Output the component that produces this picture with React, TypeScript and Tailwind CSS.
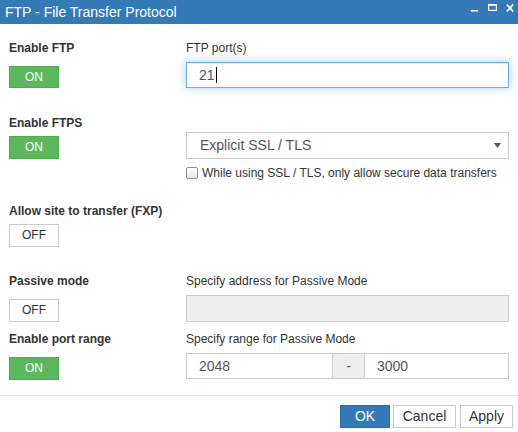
import React from "react";

function Toggle({ on }: { on: boolean }) {
  return on ? (
    <div className="w-[50px] h-[23px] bg-[#5cb85c] border border-[#4cae4c] text-white text-[12px] leading-[21px] text-center">
      ON
    </div>
  ) : (
    <div className="w-[50px] h-[23px] bg-white border border-[#cccccc] text-[#333333] text-[12px] leading-[21px] text-center">
      OFF
    </div>
  );
}

export default function App() {
  return (
    <div
      className="w-[518px] h-[432px] bg-white overflow-hidden text-[#333333]"
      style={{ fontFamily: '"Liberation Sans", Arial, sans-serif' }}
    >
      {/* Title bar */}
      <div className="h-[24px] bg-[#337ab7] flex items-center pl-[5px] pr-[4px] text-white">
        <div className="text-[14px] leading-[16px] flex-1">FTP - File Transfer Protocol</div>
        <div className="flex items-start h-full pt-[4px]">
          <svg width="7" height="8" viewBox="0 0 7 8">
            <rect x="0" y="6" width="7" height="1.5" fill="white" />
          </svg>
          <svg width="9" height="7" viewBox="0 0 9 7" className="ml-[10px]">
            <rect x="0.6" y="0.6" width="7.8" height="5.8" fill="none" stroke="white" strokeWidth="1.2" />
            <rect x="0" y="0" width="9" height="1.8" fill="white" />
          </svg>
          <svg width="8" height="8" viewBox="0 0 8 8" className="ml-[9px]">
            <path d="M0.8 0.5 L7.2 7.5 M7.2 0.5 L0.8 7.5" stroke="white" strokeWidth="1.8" />
          </svg>
        </div>
      </div>

      {/* Row 1: FTP */}
      <div className="flex">
        <div className="w-[186px] pl-[9px]">
          <div className="mt-[17px] text-[12px] leading-[14px] font-bold">Enable FTP</div>
          <div className="mt-[11px]">
            <div className="w-[50px] h-[22px] bg-[#5cb85c] border border-[#4cae4c] text-white text-[12px] leading-[20px] text-center">
              ON
            </div>
          </div>
        </div>
        <div className="w-[323px]">
          <div className="mt-[17px] text-[12px] leading-[14px]">FTP port(s)</div>
          <div className="mt-[7px] h-[26px] border border-[#66afe9] shadow-[inset_0_1px_1px_rgba(0,0,0,0.075),0_0_8px_rgba(102,175,233,0.6)] flex items-center pl-[12px] text-[14px] text-[#555555]">
            <span>21</span>
            <span className="inline-block w-[1px] h-[16px] bg-black ml-[1px]"></span>
          </div>
        </div>
      </div>

      {/* Row 2: FTPS */}
      <div className="flex">
        <div className="w-[186px] pl-[9px]">
          <div className="mt-[28px] text-[12px] leading-[14px] font-bold">Enable FTPS</div>
          <div className="mt-[6px]">
            <Toggle on />
          </div>
        </div>
        <div className="w-[323px]">
          <div className="mt-[44px] h-[27px] border border-[#cccccc] flex items-center pl-[13px] pr-[7px] text-[14px] text-[#555555]">
            <span className="flex-1">Explicit SSL / TLS</span>
            <svg width="7" height="5" viewBox="0 0 7 5">
              <path d="M0 0 L7 0 L3.5 5 Z" fill="#555555" />
            </svg>
          </div>
          <div className="mt-[6px] h-[15px] flex items-center">
            <div className="w-[12px] h-[12px] rounded-[2px] border border-[#8f8f8f] bg-gradient-to-b from-[#fdfdfd] to-[#e6e6e6]"></div>
            <span className="ml-[4px] text-[12px] leading-[14px]">While using SSL / TLS, only allow secure data transfers</span>
          </div>
        </div>
      </div>

      {/* Row 3: FXP */}
      <div className="pl-[9px]">
        <div className="mt-[24px] text-[12px] leading-[14px] font-bold">Allow site to transfer (FXP)</div>
        <div className="mt-[6px]">
          <Toggle on={false} />
        </div>
      </div>

      {/* Row 4: Passive */}
      <div className="flex">
        <div className="w-[186px] pl-[9px]">
          <div className="mt-[27px] text-[12px] leading-[14px] font-bold">Passive mode</div>
          <div className="mt-[11px]">
            <Toggle on={false} />
          </div>
        </div>
        <div className="w-[323px]">
          <div className="mt-[27px] text-[12px] leading-[14px]">Specify address for Passive Mode</div>
          <div className="mt-[7px] h-[27px] border border-[#cccccc] bg-[#eeeeee]"></div>
        </div>
      </div>

      {/* Row 5: Port range */}
      <div className="flex">
        <div className="w-[186px] pl-[9px]">
          <div className="mt-[10px] text-[12px] leading-[14px] font-bold">Enable port range</div>
          <div className="mt-[11px]">
            <Toggle on />
          </div>
        </div>
        <div className="w-[323px]">
          <div className="mt-[10px] text-[12px] leading-[14px]">Specify range for Passive Mode</div>
          <div className="mt-[7px] h-[26px] flex text-[14px] text-[#555555]">
            <div className="w-[147px] border border-[#cccccc] flex items-center pl-[12px]">2048</div>
            <div className="w-[31px] border-y border-[#cccccc] bg-[#eeeeee] flex items-center justify-center">-</div>
            <div className="flex-1 border border-[#cccccc] flex items-center pl-[12px]">3000</div>
          </div>
        </div>
      </div>

      {/* Footer */}
      <div className="mt-[15px] border-t border-[#e5e5e5] flex justify-end pt-[9px] pr-[5px] text-[14px]">
        <div className="w-[50px] h-[23px] bg-[#337ab7] border border-[#2e6da4] text-white flex items-center justify-center">
          OK
        </div>
        <div className="ml-[3px] w-[63px] h-[23px] bg-white border border-[#cccccc] text-[#333333] flex items-center justify-center">
          Cancel
        </div>
        <div className="ml-[4px] w-[53px] h-[23px] bg-white border border-[#cccccc] text-[#333333] flex items-center justify-center">
          Apply
        </div>
      </div>
    </div>
  );
}
